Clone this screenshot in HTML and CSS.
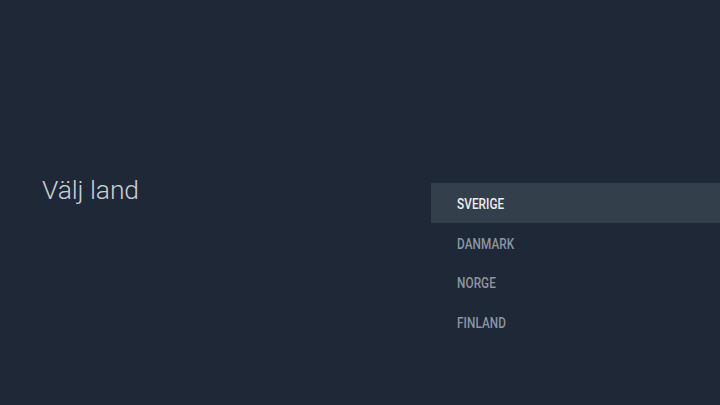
FILE: index.html
```html
<!DOCTYPE html>
<html lang="sv">
<head>
<meta charset="utf-8">
<title>Välj land</title>
<link rel="stylesheet" href="styles.css">
</head>
<body>
<main class="screen">
  <section class="intro">
    <h1 class="title">Välj land</h1>
  </section>
  <ul class="countries">
    <li class="country is-selected"><span class="label">SVERIGE</span></li>
    <li class="country"><span class="label">DANMARK</span></li>
    <li class="country"><span class="label">NORGE</span></li>
    <li class="country"><span class="label">FINLAND</span></li>
  </ul>
</main>
</body>
</html>
```

FILE: styles.css
```css
html, body {
  margin: 0;
  padding: 0;
  background: #1e2837;
}

.screen {
  display: flex;
  width: 720px;
  height: 405px;
  background: #1e2837;
  font-family: Roboto, "Liberation Sans", sans-serif;
  overflow: hidden;
}

.intro {
  width: 389px;
  padding: 174px 0 0 42px;
}

.title {
  margin: 0;
  font-size: 26.5px;
  line-height: 32px;
  font-weight: 300;
  color: #c9ced4;
  letter-spacing: -0.1px;
}

.countries {
  flex: 1;
  list-style: none;
  margin: 0;
  padding: 183px 0 0 0;
}

.country {
  height: 39.7px;
  display: flex;
  align-items: center;
  padding-left: 26px;
  padding-top: 2px;
  box-sizing: border-box;
}

.country.is-selected {
  background: #343f4c;
}

.label {
  display: inline-block;
  font-size: 15.5px;
  font-weight: 500;
  color: #8c96a2;
  transform: scaleX(0.76);
  transform-origin: left center;
  letter-spacing: 0.1px;
}

.is-selected .label {
  color: #eceef0;
}
```
